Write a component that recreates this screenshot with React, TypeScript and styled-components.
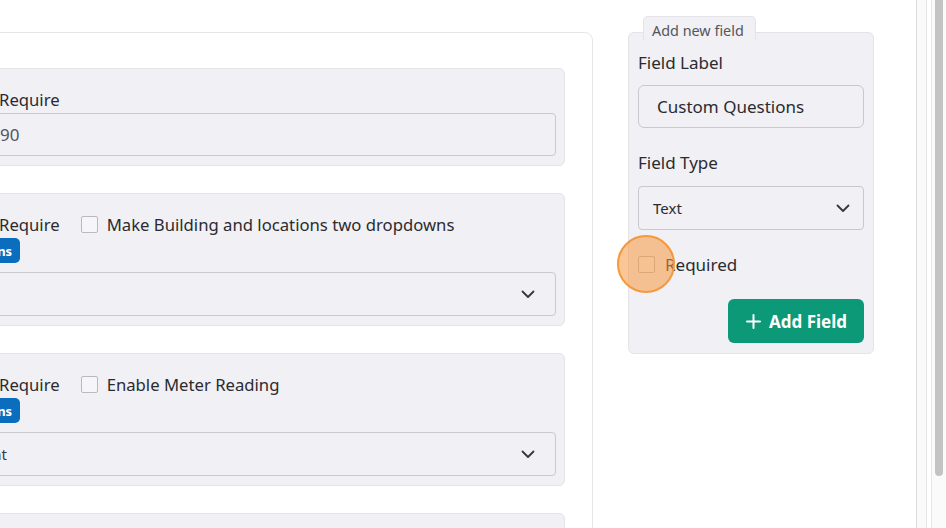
import styled, { createGlobalStyle } from "styled-components";

const GlobalStyle = createGlobalStyle`
  html, body {
    margin: 0;
    padding: 0;
    background: #ffffff;
    font-family: "Noto Sans", "Open Sans", sans-serif;
    color: #2b2b2f;
  }
  * { box-sizing: border-box; }
`;

const Page = styled.div`
  display: flex;
  flex-direction: row;
  height: 528px;
  overflow: hidden;
`;

const MainArea = styled.div`
  flex: 1;
  display: flex;
  flex-direction: row;
  align-items: flex-start;
  padding-top: 16px;
  gap: 35px;
  overflow: hidden;
`;

const SettingsCard = styled.div`
  margin-left: -30px;
  margin-top: 16px;
  width: 623px;
  min-height: 600px;
  background: #ffffff;
  border: 1px solid #e6e6ea;
  border-radius: 8px;
  padding: 35px 27px 0 18px;
  display: flex;
  flex-direction: column;
  gap: 27px;
`;

const Section = styled.div`
  background: #f0f0f5;
  border: 1px solid #e3e3e8;
  border-radius: 6px;
  padding: 18px 8px 9px 9px;
  display: flex;
  flex-direction: column;
`;

const OptionRow = styled.div`
  display: flex;
  flex-direction: row;
  align-items: center;
  height: 24px;
  font-size: 16.7px;
  gap: 9px;
`;

const RequireLabel = styled.span`
  margin-right: 12px;
`;

const Checkbox = styled.span`
  display: inline-block;
  flex-shrink: 0;
  width: 17px;
  height: 17px;
  border: 1.5px solid #b9b9bf;
  border-radius: 2px;
  background: #f6f6f9;
`;

const Badge = styled.span`
  align-self: flex-start;
  margin-top: 2px;
  margin-left: -45px;
  height: 25px;
  padding: 0 8px 0 7px;
  border-radius: 5px;
  background: #0a6dbd;
  color: #ffffff;
  font-size: 13px;
  font-weight: 700;
  display: flex;
  align-items: center;
`;

const TextInput = styled.div<{ $offset: number }>`
  margin-top: ${({ $offset }) => $offset}px;
  margin-left: -14px;
  height: 43px;
  border: 1px solid #c8c8d0;
  border-radius: 4px;
  background: #f0f0f5;
  padding: 0 14px;
  display: flex;
  align-items: center;
  font-size: 17px;
  color: #55555c;
`;

const SelectBox = styled.div<{ $indent?: number }>`
  margin-top: 9px;
  margin-left: ${({ $indent }) => ($indent ? -$indent : -14)}px;
  height: 44px;
  border: 1px solid #c8c8d0;
  border-radius: 4px;
  background: #f0f0f5;
  padding: 0 20px 0 ${({ $indent }) => ($indent ? 0 : 14)}px;
  display: flex;
  align-items: center;
  justify-content: space-between;
  font-size: 15px;
  color: #3a3a40;
`;

const Chevron = () => (
  <svg width="14" height="9" viewBox="0 0 14 9" fill="none">
    <path d="M1.5 1.5L7 7L12.5 1.5" stroke="#35353b" strokeWidth="1.8" strokeLinecap="round" strokeLinejoin="round" />
  </svg>
);

const FieldColumn = styled.div`
  width: 246px;
  display: flex;
  flex-direction: column;
`;

const LegendTab = styled.div`
  position: relative;
  z-index: 1;
  margin-left: 15px;
  align-self: flex-start;
  height: 24px;
  padding: 3px 11px 0 8px;
  background: #f0f0f5;
  border: 1px solid #e3e3e8;
  border-bottom: none;
  border-radius: 5px 5px 0 0;
  font-size: 14.4px;
  color: #55555c;
  display: flex;
  align-items: center;
`;

const FieldPanel = styled.div`
  margin-top: -8px;
  background: #f0f0f5;
  border: 1px solid #e3e3e8;
  border-radius: 6px;
  padding: 18px 9px 10px 9px;
  display: flex;
  flex-direction: column;
`;

const FieldLabel = styled.div<{ $top?: number }>`
  font-size: 17px;
  line-height: 24px;
  margin-top: ${({ $top }) => $top ?? 0}px;
`;

const PanelInput = styled.div`
  margin-top: 10px;
  height: 43px;
  border: 1px solid #c8c8d0;
  border-radius: 6px;
  background: #f0f0f5;
  padding: 0 18px;
  display: flex;
  align-items: center;
  font-size: 17px;
  color: #2b2b2f;
`;

const PanelSelect = styled(PanelInput)`
  margin-top: 11px;
  height: 44px;
  padding: 0 13px 0 14px;
  justify-content: space-between;
  font-size: 15px;
  border-radius: 4px;
`;

const RequiredRow = styled.div`
  position: relative;
  margin-top: 22px;
  display: flex;
  align-items: center;
  gap: 10px;
  font-size: 17px;
  height: 24px;
`;

const ClickHighlight = styled.span`
  position: absolute;
  left: -21px;
  top: -17px;
  width: 58px;
  height: 58px;
  border-radius: 50%;
  background: rgba(248, 152, 62, 0.55);
  border: 2px solid #f5993d;
`;

const AddButton = styled.button`
  margin-top: 23px;
  align-self: flex-end;
  height: 44px;
  padding: 0 17px 0 18px;
  border: none;
  border-radius: 6px;
  background: #0c9977;
  color: #ffffff;
  font-family: inherit;
  font-size: 17px;
  font-weight: 700;
  display: flex;
  align-items: center;
  gap: 8px;
`;

const SideStrip = styled.div`
  width: 30px;
  display: flex;
  flex-direction: row;
  border-left: 1px solid #dcdcdc;
`;

const StripInner = styled.div`
  width: 10px;
  background: #fafafa;
  border-right: 1px solid #e6e6e6;
`;

const ScrollTrack = styled.div`
  margin-left: 4px;
  flex: 1;
  background: #fafafa;
  border-left: 1px solid #e6e6e6;
  padding: 0 3px 0 3px;
`;

const ScrollThumb = styled.div`
  width: 8px;
  height: 476px;
  background: #c3c3c3;
  border-radius: 0 0 4px 4px;
`;

export default function App() {
  return (
    <>
      <GlobalStyle />
      <Page>
        <MainArea>
          <SettingsCard>
            <Section>
              <OptionRow>
                <RequireLabel>Require</RequireLabel>
              </OptionRow>
              <TextInput $offset={2}>90</TextInput>
            </Section>

            <Section>
              <OptionRow>
                <RequireLabel>Require</RequireLabel>
                <Checkbox />
                <span>Make Building and locations two dropdowns</span>
              </OptionRow>
              <Badge>Options</Badge>
              <SelectBox>
                <span />
                <Chevron />
              </SelectBox>
            </Section>

            <Section>
              <OptionRow>
                <RequireLabel>Require</RequireLabel>
                <Checkbox />
                <span>Enable Meter Reading</span>
              </OptionRow>
              <Badge>Options</Badge>
              <SelectBox $indent={79}>
                <span>Department</span>
                <Chevron />
              </SelectBox>
            </Section>

            <Section>
              <OptionRow>
                <RequireLabel>Require</RequireLabel>
              </OptionRow>
            </Section>
          </SettingsCard>

          <FieldColumn>
            <LegendTab>Add new field</LegendTab>
            <FieldPanel>
              <FieldLabel>Field Label</FieldLabel>
              <PanelInput>Custom Questions</PanelInput>
              <FieldLabel $top={23}>Field Type</FieldLabel>
              <PanelSelect>
                <span>Text</span>
                <Chevron />
              </PanelSelect>
              <RequiredRow>
                <Checkbox />
                <span>Required</span>
                <ClickHighlight />
              </RequiredRow>
              <AddButton>
                <svg width="15" height="15" viewBox="0 0 15 15" fill="none">
                  <path d="M7.5 1V14M1 7.5H14" stroke="#ffffff" strokeWidth="2" strokeLinecap="round" />
                </svg>
                Add Field
              </AddButton>
            </FieldPanel>
          </FieldColumn>
        </MainArea>

        <SideStrip>
          <StripInner />
          <ScrollTrack>
            <ScrollThumb />
          </ScrollTrack>
        </SideStrip>
      </Page>
    </>
  );
}
